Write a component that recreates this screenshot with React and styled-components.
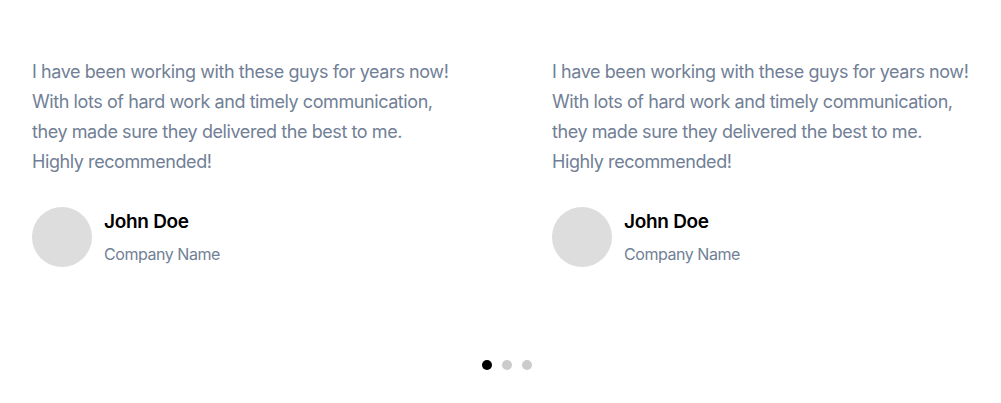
import React from "react";
import styled, { createGlobalStyle } from "styled-components";

const testimonials = [
  {
    quote: [
      "I have been working with these guys for years now!",
      "With lots of hard work and timely communication,",
      "they made sure they delivered the best to me.",
      "Highly recommended!",
    ],
    name: "John Doe",
    company: "Company Name",
  },
  {
    quote: [
      "I have been working with these guys for years now!",
      "With lots of hard work and timely communication,",
      "they made sure they delivered the best to me.",
      "Highly recommended!",
    ],
    name: "John Doe",
    company: "Company Name",
  },
];

const App = () => {
  return (
    <>
      <GlobalStyle />
      <StyledSlider>
        <StyledTrack>
          {testimonials.map((item, i) => (
            <StyledCard key={i}>
              <StyledQuote>
                {item.quote.map((line) => (
                  <React.Fragment key={line}>
                    {line}
                    <br />
                  </React.Fragment>
                ))}
              </StyledQuote>
              <StyledAuthor>
                <StyledAvatar />
                <StyledMeta>
                  <StyledName>{item.name}</StyledName>
                  <StyledCompany>{item.company}</StyledCompany>
                </StyledMeta>
              </StyledAuthor>
            </StyledCard>
          ))}
        </StyledTrack>
        <StyledDots>
          {[0, 1, 2].map((i) => (
            <StyledDot key={i} $active={i === 0} />
          ))}
        </StyledDots>
      </StyledSlider>
    </>
  );
};

const GlobalStyle = createGlobalStyle`
  body {
    margin: 0;
    background: #fff;
    font-family: Inter, "Noto Sans", sans-serif;
  }
`;

const StyledSlider = styled.div`
  width: 1001px;
  padding: 57px 32px 0;
  box-sizing: border-box;
`;

const StyledTrack = styled.div`
  display: grid;
  grid-template-columns: 488px 488px;
  column-gap: 32px;
`;

const StyledCard = styled.div`
  display: flex;
  flex-direction: column;
`;

const StyledQuote = styled.p`
  margin: 0;
  font-size: 18px;
  line-height: 30px;
  letter-spacing: -0.42px;
  color: #718096;
  white-space: nowrap;
`;

const StyledAuthor = styled.div`
  display: flex;
  align-items: center;
  gap: 12px;
  margin-top: 30px;
`;

const StyledAvatar = styled.div`
  width: 60px;
  height: 60px;
  border-radius: 50%;
  background: #dddddd;
  flex-shrink: 0;
`;

const StyledMeta = styled.div`
  display: flex;
  flex-direction: column;
  gap: 9px;
`;

const StyledName = styled.div`
  font-size: 19px;
  line-height: 24px;
  font-weight: 600;
  letter-spacing: -0.3px;
  color: #000;
`;

const StyledCompany = styled.div`
  font-size: 16px;
  line-height: 22px;
  letter-spacing: -0.45px;
  color: #718096;
`;

const StyledDots = styled.div`
  display: flex;
  justify-content: center;
  gap: 10px;
  margin-top: 93px;
  padding-left: 13px;
`;

const StyledDot = styled.span`
  width: 10px;
  height: 10px;
  border-radius: 50%;
  background: ${(p) => (p.$active ? "#000" : "#cccccc")};
`;

export default App;
